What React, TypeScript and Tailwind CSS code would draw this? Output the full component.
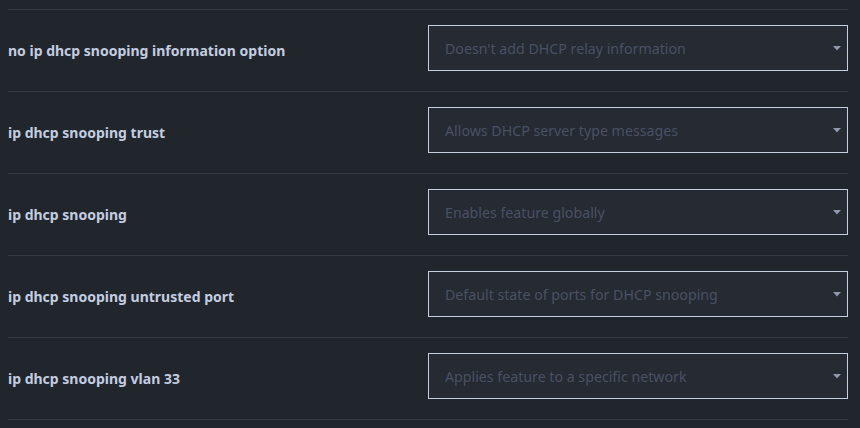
import React from 'react';

const ROWS = [
  { label: 'no ip dhcp snooping information option', hint: "Doesn't add DHCP relay information" },
  { label: 'ip dhcp snooping trust', hint: 'Allows DHCP server type messages' },
  { label: 'ip dhcp snooping', hint: 'Enables feature globally' },
  { label: 'ip dhcp snooping untrusted port', hint: 'Default state of ports for DHCP snooping' },
  { label: 'ip dhcp snooping vlan 33', hint: 'Applies feature to a specific network' },
];

const App: React.FC = () => {
  return (
    <div className="min-h-screen bg-[#21252c] pl-2 pr-3 pt-[9px]" style={{ fontFamily: '"Noto Sans", "Open Sans", sans-serif' }}>
      <div className="border-t border-[#353a44]">
        {ROWS.map((row) => (
          <div key={row.label} className="grid grid-cols-2 items-center border-b border-[#353a44] pt-[15px] pb-5">
            <span className="text-[14px] font-bold text-[#c3cde0] mt-[4px]">{row.label}</span>
            <div className="relative h-[46px] border border-[#c6cfe0] bg-[#252a33] flex items-center pl-4">
              <span className="text-[14.2px] text-[#4a5163] mt-[2px]">{row.hint}</span>
              <svg className="absolute right-[6px] top-[20px]" width="8" height="5" viewBox="0 0 8 5">
                <path d="M0 0 H8 L4 4.5 Z" fill="#8f98ab" />
              </svg>
            </div>
          </div>
        ))}
      </div>
    </div>
  );
};

export default App;
